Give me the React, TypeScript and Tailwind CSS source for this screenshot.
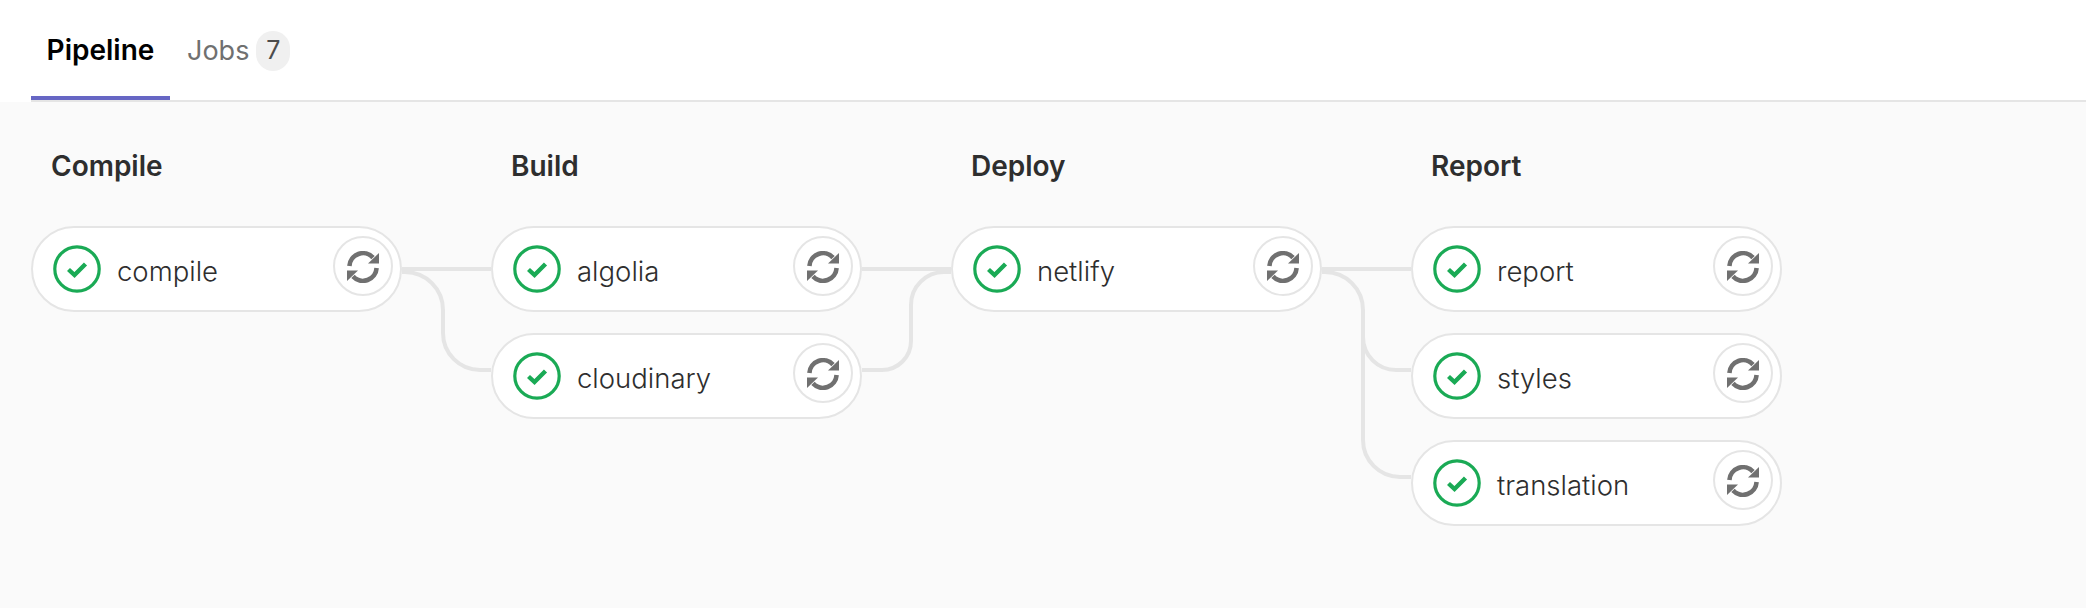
const font = { fontFamily: "Inter, 'Liberation Sans', sans-serif" };

function RetryIcon() {
  return (
    <svg width="32" height="32" viewBox="0 0 32 32" className="mt-[2px] shrink-0">
      <path d="M2.4 15 A13.6 13.6 0 0 1 26 6.6" fill="none" stroke="#707070" strokeWidth="4.6" />
      <path d="M32 2 V12.5 H21 Z" fill="#707070" />
      <path d="M29.6 17 A13.6 13.6 0 0 1 6 25.4" fill="none" stroke="#707070" strokeWidth="4.6" />
      <path d="M0 30 V19.5 H11 Z" fill="#707070" />
    </svg>
  );
}

function Job({ name }: { name: string }) {
  return (
    <div className="flex h-[86px] w-[371px] items-center rounded-[43px] border-2 border-[#e5e5e5] bg-white pl-[20px] pr-[7px]">
      <svg width="48" height="48" viewBox="0 0 48 48" className="shrink-0">
        <circle cx="24" cy="24" r="22.2" fill="#fff" stroke="#1aaa55" strokeWidth="3.2" />
        <path d="M15.5 24.5 L21.5 30 L32.5 19" fill="none" stroke="#1aaa55" strokeWidth="4.4" />
      </svg>
      <span className="ml-[16px] mt-[5px] flex-1 text-[27.5px] font-light leading-none text-[#2e2e2e]">{name}</span>
      <div className="mb-[6px] flex h-[60px] w-[60px] shrink-0 items-center justify-center rounded-full border-2 border-[#e5e5e5] bg-white">
        <RetryIcon />
      </div>
    </div>
  );
}

function Stage({ title, jobs }: { title: string; jobs: string[] }) {
  return (
    <div className="flex flex-col">
      <h2 className="mb-[44px] ml-[20px] h-[32px] text-[28px] font-semibold leading-[32px] text-[#2e2e2e]">{title}</h2>
      <div className="flex flex-col gap-[21px]">
        {jobs.map((j) => (
          <Job key={j} name={j} />
        ))}
      </div>
    </div>
  );
}

function Connector({ paths }: { paths: string[] }) {
  return (
    <svg width="89" height="300" viewBox="0 0 89 300" className="mt-[76px] shrink-0" fill="none" stroke="#e5e5e5" strokeWidth="4">
      {paths.map((d) => (
        <path key={d} d={d} />
      ))}
    </svg>
  );
}

export default function App() {
  return (
    <div className="h-[608px] w-[2086px] overflow-hidden bg-[#fafafa]" style={font}>
      <div className="bg-white pl-[31px]">
        <div className="flex h-[102px] border-b-2 border-[#e5e5e5]">
          <div className="flex h-[100px] w-[139px] items-center justify-center border-b-4 border-[#6666c4] pt-[4px] text-[28px] font-semibold text-black">
            Pipeline
          </div>
          <div className="ml-[17px] flex h-[100px] items-center pt-[2px] text-[27px] text-[#707070]">
            Jobs
            <span className="ml-[7px] flex h-[40px] w-[34px] items-center justify-center rounded-full bg-[#f0f0f0] text-[25px] text-[#4c4c4c]">7</span>
          </div>
        </div>
      </div>
      <div className="flex pl-[31px] pt-[48px]">
        <Stage title="Compile" jobs={["compile"]} />
        <Connector paths={["M0 43 H89", "M0 46 H3 A38 38 0 0 1 41 84 V107 A37 37 0 0 0 78 144 H89"]} />
        <Stage title="Build" jobs={["algolia", "cloudinary"]} />
        <Connector paths={["M0 43 H89", "M0 144 H20 A29 29 0 0 0 49 115 V79 A33 33 0 0 1 82 46 H89"]} />
        <Stage title="Deploy" jobs={["netlify"]} />
        <Connector
          paths={[
            "M0 43 H89",
            "M0 46 H3 A38 38 0 0 1 41 84 V111 A33 33 0 0 0 74 144 H89",
            "M41 111 V214 A37 37 0 0 0 78 251 H89",
          ]}
        />
        <Stage title="Report" jobs={["report", "styles", "translation"]} />
      </div>
    </div>
  );
}
